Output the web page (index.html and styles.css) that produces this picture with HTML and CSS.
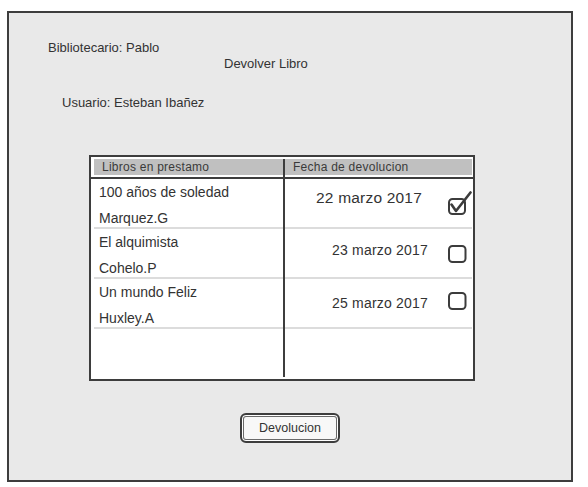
FILE: index.html
```html
<!DOCTYPE html>
<html lang="es">
<head>
<meta charset="utf-8">
<title>Devolver Libro</title>
<link rel="stylesheet" href="styles.css">
</head>
<body>
<div class="frame">
  <div class="label label--lib">Bibliotecario: Pablo</div>
  <div class="label label--title">Devolver Libro</div>
  <div class="label label--user">Usuario: Esteban Ibañez</div>

  <div class="table">
    <div class="thead">
      <div class="thead-band">
        <span class="th">Libros en prestamo</span>
        <span></span>
        <span class="th">Fecha de devolucion</span>
      </div>
    </div>
    <div class="row row--1">
      <div class="book">
        <div class="line">100 años de soledad</div>
        <div class="line">Marquez.G</div>
      </div>
      <span></span>
      <div class="due">
        <span class="date">22 marzo 2017</span>
        <svg class="check" width="25" height="26" viewBox="0 0 25 26">
          <rect x="2" y="8" width="16" height="15" rx="3.5" fill="#fff" stroke="#3c3c3c" stroke-width="2"/>
          <path d="M4.5 13.5 L9 20 L23.5 1.5" fill="none" stroke="#3c3c3c" stroke-width="2.6" stroke-linecap="round" stroke-linejoin="round"/>
        </svg>
      </div>
    </div>
    <div class="row row--2">
      <div class="book">
        <div class="line">El alquimista</div>
        <div class="line">Cohelo.P</div>
      </div>
      <span></span>
      <div class="due">
        <span class="date">23 marzo 2017</span>
        <svg class="check" width="25" height="26" viewBox="0 0 25 26">
          <rect x="2" y="8" width="16.5" height="16" rx="3.5" fill="#fff" stroke="#3c3c3c" stroke-width="2"/>
        </svg>
      </div>
    </div>
    <div class="row row--3">
      <div class="book">
        <div class="line">Un mundo Feliz</div>
        <div class="line">Huxley.A</div>
      </div>
      <span></span>
      <div class="due">
        <span class="date">25 marzo 2017</span>
        <svg class="check" width="25" height="26" viewBox="0 0 25 26">
          <rect x="2" y="8" width="16.5" height="16" rx="3.5" fill="#fff" stroke="#3c3c3c" stroke-width="2"/>
        </svg>
      </div>
    </div>
    <div class="divider"></div>
  </div>

  <div class="actions">
    <button class="btn" type="button">Devolucion</button>
  </div>
</div>
</body>
</html>
```

FILE: styles.css
```css
html, body {
  margin: 0;
  padding: 0;
  background: #ffffff;
}

body {
  font-family: "Liberation Sans", Arial, sans-serif;
  color: #333333;
}

.frame {
  box-sizing: border-box;
  margin: 11px 0 0 7px;
  width: 566px;
  height: 471px;
  border: 2px solid #3d3d3d;
  background: #e9e9e9;
  padding-top: 27px;
}

.label {
  font-size: 13px;
  line-height: 16px;
  white-space: nowrap;
}

.label--lib {
  padding-left: 39px;
}

.label--title {
  padding-left: 215px;
}

.label--user {
  padding-left: 53px;
  margin-top: 23px;
}

.table {
  position: relative;
  box-sizing: border-box;
  margin: 44px 0 0 80px;
  width: 386px;
  height: 226px;
  border: 2px solid #3d3d3d;
  background: #ffffff;
}

.thead {
  padding: 2px 1px 2px 3px;
  border-bottom: 2px solid #3d3d3d;
}

.thead-band {
  display: grid;
  grid-template-columns: 189px 2px 1fr;
  height: 16px;
  background: #c0c0c0;
}

.th {
  padding-left: 8px;
  font-size: 12px;
  line-height: 17px;
  letter-spacing: 0.25px;
  color: #3a3a3a;
  white-space: nowrap;
}

.row {
  display: grid;
  grid-template-columns: 189px 2px 1fr;
  height: 48px;
  margin: 0 1px 0 3px;
  border-bottom: 2px solid #dcdcdc;
}

.book {
  padding-left: 5px;
}

.line {
  font-size: 14px;
  line-height: 26px;
  white-space: nowrap;
}

.due {
  display: flex;
  justify-content: flex-end;
  align-items: flex-start;
}

.date {
  font-size: 14px;
  line-height: 20px;
  letter-spacing: 0.2px;
  white-space: nowrap;
  margin-right: 19px;
}

.check {
  display: block;
  flex: none;
}

.row--1 .date {
  font-size: 15.5px;
  padding-top: 9px;
  margin-right: 25px;
}

.row--1 .check {
  margin-top: 12px;
}

.row--2 .date {
  padding-top: 11px;
}

.row--2 .check {
  margin-top: 9px;
}

.row--3 .date {
  padding-top: 14px;
}

.row--3 .check {
  margin-top: 6px;
}

.divider {
  position: absolute;
  left: 192px;
  top: 2px;
  bottom: 2px;
  width: 2px;
  background: #3d3d3d;
}

.actions {
  display: flex;
  justify-content: center;
  margin-top: 32px;
}

.btn {
  box-sizing: border-box;
  width: 100px;
  height: 30px;
  padding: 0;
  border: 2px solid #3d3d3d;
  border-radius: 6px;
  background: #f8f8f8;
  box-shadow: inset 0 0 0 1px #ffffff, inset 0 0 0 2px #6a6a6a;
  font-family: "Liberation Sans", Arial, sans-serif;
  font-size: 12.5px;
  color: #333333;
  line-height: 26px;
}
```
